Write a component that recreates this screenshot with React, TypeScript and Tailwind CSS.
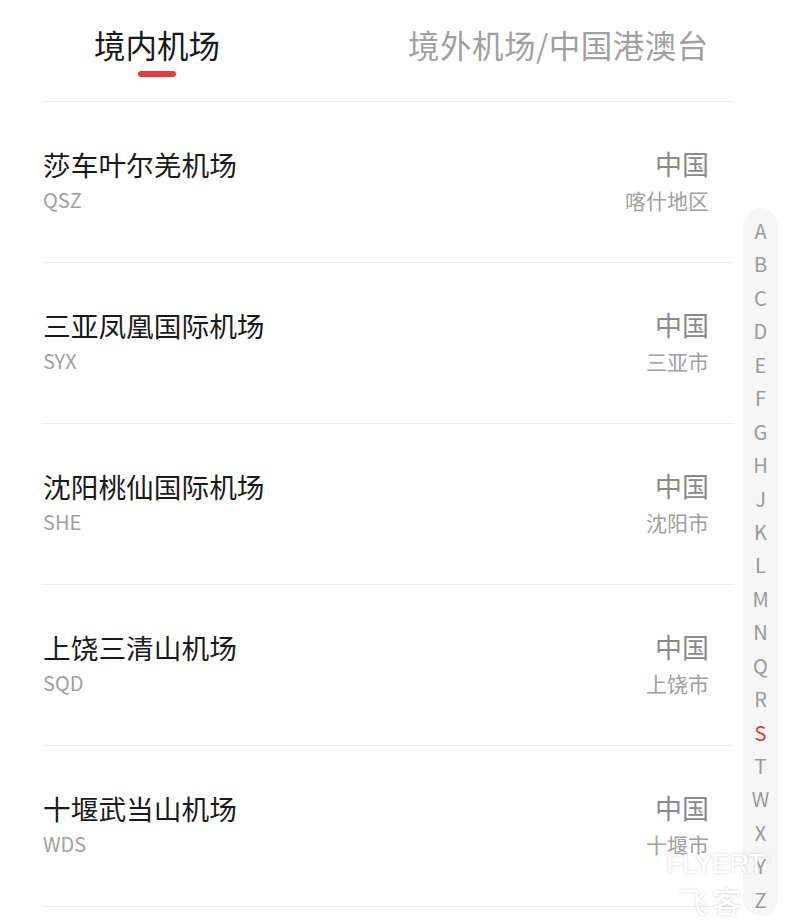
import React from "react";

const rows = [
  { name: "莎车叶尔羌机场", code: "QSZ", city: "喀什地区" },
  { name: "三亚凤凰国际机场", code: "SYX", city: "三亚市" },
  { name: "沈阳桃仙国际机场", code: "SHE", city: "沈阳市" },
  { name: "上饶三清山机场", code: "SQD", city: "上饶市" },
  { name: "十堰武当山机场", code: "WDS", city: "十堰市" },
];

const letters = ["A","B","C","D","E","F","G","H","J","K","L","M","N","Q","R","S","T","W","X","Y","Z"];

export default function App() {
  return (
    <div
      className="relative w-[800px] h-[924px] overflow-hidden bg-white"
      style={{ fontFamily: '"Noto Sans CJK SC", "Noto Sans", sans-serif' }}
    >
      {/* Tabs */}
      <div className="flex h-[101px] items-start">
        <div className="ml-[94px] flex flex-col items-center pt-[22px]">
          <div className="text-[31.5px] leading-[44px] text-[#1a1a1a]">境内机场</div>
          <div className="mt-[5px] h-[6px] w-[38px] rounded-full bg-[#e8393c]" />
        </div>
        <div className="ml-[188px] pt-[22px] text-[31.5px] leading-[44px] tracking-[0.5px] text-[#a0a0a0]">
          境外机场/中国港澳台
        </div>
      </div>

      {/* List */}
      <div className="mx-[42px] w-[692px] border-t border-[#ececec]">
        {rows.map((r) => (
          <div
            key={r.code}
            className="flex h-[161px] justify-between border-b border-[#ececec] pl-[1px] pr-[25px] pt-[43px]"
          >
            <div className="flex flex-col">
              <div className="text-[27.7px] leading-[38px] text-[#1a1a1a]">{r.name}</div>
              <div className="-mt-[1px] text-[20px] leading-[36px] text-[#a0a0a0]">{r.code}</div>
            </div>
            <div className="flex flex-col items-end">
              <div className="text-[27px] leading-[38px] text-[#8a8a8a]">中国</div>
              <div className="-mt-[1px] text-[21px] leading-[36px] text-[#a0a0a0]">{r.city}</div>
            </div>
          </div>
        ))}
      </div>

      {/* Index bar */}
      <div className="absolute left-[743px] top-[208px] flex h-[708px] w-[35px] flex-col items-center rounded-full bg-[#f6f6f6] pt-[6px]">
        {letters.map((l) => (
          <div
            key={l}
            className={`h-[33.45px] text-[20px] leading-[33.45px] ${l === "S" ? "text-[#e03a3e]" : "text-[#9a9a9a]"}`}
          >
            {l}
          </div>
        ))}
      </div>

      {/* Watermark */}
      <div className="pointer-events-none absolute left-[666px] top-[848px] flex flex-col items-center text-white [text-shadow:0_0_3px_rgba(0,0,0,0.2)]">
        <div className="text-[27px] leading-[32px] tracking-[-0.5px]" style={{ fontFamily: '"Liberation Sans", sans-serif' }}>
          FLYERT<span className="relative -top-[10px] text-[14px]">+</span>
        </div>
        <div className="-mt-[2px] pr-[14px] text-[30px] leading-[36px] tracking-[4px]">飞客</div>
      </div>
    </div>
  );
}
